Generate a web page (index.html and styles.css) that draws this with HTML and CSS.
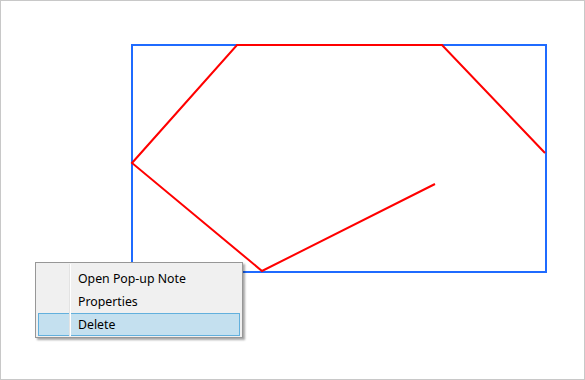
FILE: index.html
```html
<!DOCTYPE html>
<html lang="en">
<head>
  <meta charset="UTF-8">
  <title>Annotation context menu</title>
  <link rel="stylesheet" href="styles.css">
</head>
<body>
  <div class="canvas">
    <svg class="drawing" width="585" height="380" viewBox="0 0 585 380">
      <!-- selection box -->
      <rect x="132" y="45" width="414" height="227" fill="none" stroke="#1f6bff" stroke-width="2"/>
      <!-- polyline annotation -->
      <polyline points="435,184 262,271 132,163 237,45 442,45 545,153"
                fill="none" stroke="#ff0000" stroke-width="2" stroke-linejoin="miter"/>
    </svg>

    <ul class="context-menu">
      <li class="menu-item">Open Pop-up Note</li>
      <li class="menu-item">Properties</li>
      <li class="menu-item active">Delete</li>
    </ul>
  </div>
</body>
</html>
```

FILE: styles.css
```css
html, body {
  margin: 0;
  background: #ffffff;
}
.canvas {
  position: relative;
  width: 585px;
  height: 380px;
  box-sizing: border-box;
  border: 1px solid #c8c8c8;
  background: #ffffff;
  overflow: hidden;
}
.drawing {
  position: absolute;
  left: -1px;
  top: -1px;
}
.context-menu {
  position: absolute;
  left: 34px;
  top: 261px;
  width: 208px;
  margin: 0;
  padding: 4px 2px 1px;
  list-style: none;
  box-sizing: border-box;
  background: #f0f0f0;
  border: 1px solid #979797;
  box-shadow: 2px 2px 2px rgba(0, 0, 0, 0.35);
  font-family: "Noto Sans", "Liberation Sans", sans-serif;
  font-size: 12.3px;
  color: #000000;
}
.context-menu::before {
  content: "";
  position: absolute;
  left: 33px;
  top: 1px;
  bottom: 1px;
  width: 1px;
  background: #e3e3e3;
  border-right: 1px solid #ffffff;
  z-index: 1;
}
.menu-item {
  height: 23px;
  line-height: 22px;
  padding-left: 39px;
  box-sizing: border-box;
  border: 1px solid transparent;
}
.menu-item.active {
  background: #c4e0ef;
  border-color: #62b0dd;
}
```
